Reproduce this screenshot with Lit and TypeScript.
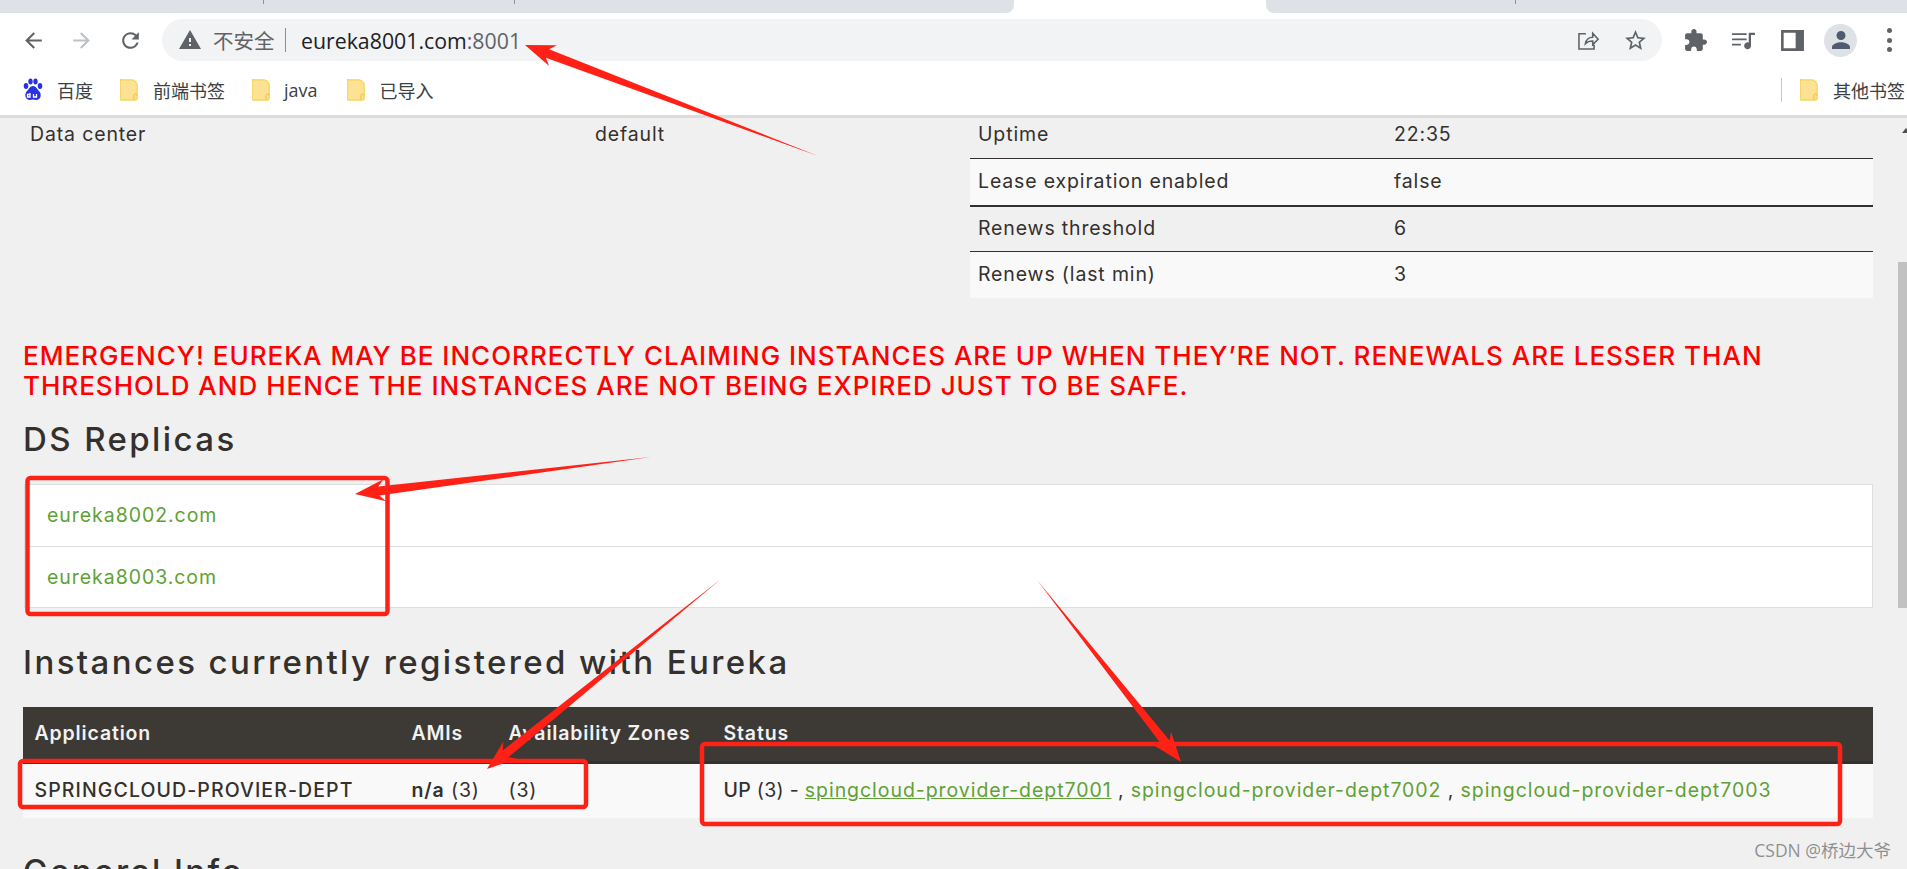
import { LitElement, html, css, svg } from "lit";
import { customElement } from "lit/decorators.js";

type P = [number, number];
const arrows: [P, P][] = [
  [[818, 156], [525, 45]],
  [[651, 457], [355, 494]],
  [[721, 579], [487, 769]],
  [[1037, 580], [1181, 762]],
];
const boxes = [
  [27.5, 478, 360, 136],
  [20, 761, 566, 46],
  [702, 744, 1138, 80],
];
function arrowPoints([s, t]: [P, P]) {
  const dx = t[0] - s[0], dy = t[1] - s[1];
  const len = Math.hypot(dx, dy);
  const d = [dx / len, dy / len], n = [-d[1], d[0]];
  const at = (back: number, off: number) =>
    `${t[0] - d[0] * back + n[0] * off},${t[1] - d[1] * back + n[1] * off}`;
  return [`${s[0]},${s[1]}`, at(24, 4.5), at(30, 11), `${t[0]},${t[1]}`, at(30, -11), at(24, -4.5)].join(" ");
}

const icon = (d: string) => html`<svg class="ico" viewBox="0 0 24 24"><path d=${d}></path></svg>`;
const folder = html`<svg class="folder" viewBox="0 0 18 22">
  <path class="folder-body" d="M1.5 .8h10.5q1.6 0 3 1.4l1.2 1.4q1 1 1 2.4v13q0 2-2 2h-13.700q-1.300 0-1.300-1.300v-18.700q0-.8 1.300-.8z"></path>
  <path class="folder-clip" d="M14 20.500v-4q0-1.500 1.500-1.500t1.500 1.500"></path>
</svg>`;

@customElement("app-root")
export class AppRoot extends LitElement {
  static styles = css`
    :host { display: block; position: relative; width: 1907px; height: 869px; overflow: hidden; background: #f0f0f0; font-family: Inter, "Noto Sans CJK SC", sans-serif; color: #34302d; }
    .tabs { height: 13px; background: #fff; display: flex; justify-content: space-between; }
    .seg { height: 13px; background: #dee1e6; display: flex; }
    .seg.l { width: 1014px; border-bottom-right-radius: 8px; }
    .seg.r { width: 641px; border-bottom-left-radius: 8px; }
    .seg i { display: block; width: 1px; height: 4px; background: #8f9296; }
    .t1 { margin-left: 263px; } .t2 { margin-left: 250px; }
    .t4 { margin-left: 249px; }
    .toolbar { height: 53px; box-sizing: border-box; padding: 6px 0 0 9px; background: #fff; display: flex; align-items: flex-start; }
    .btn { flex: none; width: 48.500px; height: 42px; display: flex; align-items: center; justify-content: center; }
    .ico { width: 25px; height: 25px; fill: #5f6368; display: block; }
    .ico.even { fill-rule: evenodd; }
    .off .ico { fill: #bdc1c6; }
    .omni { flex: none; margin-left: 7.500px; width: 1500px; height: 42px; border-radius: 21px; background: #f1f3f4; display: flex; align-items: center; font-family: "Open Sans", "Noto Sans CJK SC", sans-serif; box-sizing: border-box; padding-left: 16px; }
    .omni .warn { width: 24px; height: 24px; }
    .insecure { margin-left: 11px; font-size: 20.500px; color: #5f6368; }
    .bar { margin: 0 15px 0 10px; width: 1.500px; height: 24px; background: #8a8d91; }
    .host { font-size: 21.300px; color: #202124; }
    .host span { color: #5f6368; }
    .grow { flex: 1; }
    .omni .btn { width: 48px; }
    .omni .btn.end { margin-right: 3px; }
    .tool-first { margin-left: 9px; }
    .avatar { width: 33px; height: 33px; border-radius: 50%; background: #dee1e6; display: flex; align-items: center; justify-content: center; }
    .avatar svg { width: 24px; height: 24px; fill: #4f5b6e; }
    .dots { display: flex; flex-direction: column; gap: 4.500px; }
    .dots b { width: 5px; height: 5px; border-radius: 50%; background: #5f6368; display: block; }
    .stroke { fill: none; stroke: #5f6368; stroke-width: 1.500; }
    .marks { height: 49px; background: #fff; display: flex; align-items: center; padding-left: 23px; font: 18px "Open Sans", "Noto Sans CJK SC", sans-serif; color: #3c4043; box-sizing: border-box; padding-bottom: 2px; }
    .mark { display: flex; align-items: center; gap: 15px; margin-right: 27px; white-space: nowrap; flex: none; }
    .mark.java { margin-right: 29px; gap: 14px; }
    .paw { width: 20px; height: 24px; margin-right: -1px; }
    .folder { width: 18px; height: 22px; flex: none; }
    .folder-body { fill: #fde293; stroke: #f8d45c; stroke-width: 1.300; }
    .folder-clip { fill: none; stroke: #f1bb3a; stroke-width: 1; }
    .marks .sep { width: 1px; height: 24px; background: #c6c8ca; margin-right: 18px; flex: none; }
    .marks .last { margin-right: 2px; }
    .rule { height: 3px; background: #dcdcdc; }
    .page { height: 751px; display: flex; overflow: hidden; }
    .main { width: 1850px; margin-left: 23px; flex: none; font-size: 19.500px; letter-spacing: .85px; }
    .scroll { width: 9px; margin-left: 25px; flex: none; position: relative; }
    .thumb { position: absolute; left: 0; right: 0; top: 144px; height: 346px; background: #c1c1c1; }
    .up { position: absolute; left: 4px; top: 10px; width: 0; height: 0; border: 4px solid transparent; border-top: 0; border-bottom: 5px solid #505050; }
    .top { display: flex; height: 179px; }
    .left { width: 947px; flex: none; display: grid; grid-template-columns: 565px 1fr; padding: 4px 0 0 7px; box-sizing: border-box; height: 40px; line-height: 24px; }
    .right { flex: 1; }
    .kv { display: grid; grid-template-columns: 416px 1fr; box-sizing: border-box; align-items: center; padding: 0 0 2px 8px; height: 46.500px; border-top: 1px solid #34302d; }
    .kv.first { height: 40px; border-top: 0; padding-bottom: 9px; }
    .kv.odd { background: #f9f9f9; }
    .kv.thick { border-top-width: 2px; }
    .emergency { margin: 44px 0 0; font-size: 26px; line-height: 29.500px; font-weight: 500; color: #ff0000; text-transform: uppercase; width: 1780px; letter-spacing: 1px; }
    h2 { margin: 0; font-size: 33px; font-weight: 500; line-height: 40px; color: #34302d; letter-spacing: 2.400px; }
    .h-ds { margin-top: 19px; }
    .panel { margin-top: 25px; margin-left: 1px; background: #fff; border: 1px solid #ddd; height: 124px; box-sizing: border-box; }
    .panel div { height: 61px; box-sizing: border-box; padding: 0 0 2px 22px; display: flex; align-items: center; }
    .panel div + div { border-top: 1px solid #ddd; height: 61px; padding-bottom: 0; }
    a { color: #5fa134; text-decoration: none; letter-spacing: .95px; }
    a.u { text-decoration: underline; }
    .h-in { margin-top: 34px; }
    .grid { display: grid; grid-template-columns: 377px 97px 214px 1fr; align-items: center; padding-bottom: 2px; box-sizing: border-box; }
    .grid > * { padding-left: 11.500px; white-space: nowrap; }
    .grid > .status { padding-left: 12.500px; }
    .head { margin-top: 25px; height: 57px; background: #3d3935; color: #f1f1f1; font-weight: 600; border-bottom: 3px solid #34302d; }
    .row { height: 54px; background: #f9f9f9; }
    .row b { font-weight: 600; }
    .lead { letter-spacing: .3px; }
    .lead b { font-weight: 500; }
    .app { font-weight: 500; letter-spacing: 1.100px; }
    .h-gen { margin-top: 33px; }
    .overlay { position: absolute; left: 0; top: 0; width: 1907px; height: 869px; pointer-events: none; }
    .overlay polygon { fill: #ff2116; }
    .overlay rect { fill: none; stroke: #ff2116; stroke-width: 4.500; }
    .mark-csdn { position: absolute; right: 16px; top: 837px; font: 17.500px "Open Sans", "Noto Sans CJK SC", sans-serif; color: rgba(110, 110, 110, .75); white-space: nowrap; }
  `;

  render() {
    return html`
      <div class="tabs">
        <div class="seg l"><i class="t1"></i><i class="t2"></i></div>
        <div class="seg r"><i class="t4"></i></div>
      </div>
      <div class="toolbar">
        <div class="btn">${icon("M20 11H7.830l5.590-5.590L12 4l-8 8 8 8 1.410-1.410L7.830 13H20v-2z")}</div>
        <div class="btn off"><svg class="ico" viewBox="0 0 24 24"><path d="M4 11h12.170l-5.590-5.590L12 4l8 8-8 8-1.410-1.410L16.170 13H4v-2z"></path></svg></div>
        <div class="btn">${icon("M17.650 6.350A7.958 7.958 0 0 0 12 4c-4.420 0-7.990 3.580-7.990 8s3.570 8 7.990 8c3.730 0 6.840-2.550 7.730-6h-2.080A5.990 5.990 0 0 1 12 18c-3.310 0-6-2.690-6-6s2.690-6 6-6c1.660 0 3.140.690 4.220 1.780L13 11h7V4l-2.350 2.350z")}</div>
        <div class="omni">
          <svg class="ico warn" viewBox="0 0 24 24"><path d="M1 21h22L12 2 1 21zm12-3h-2v-2h2v2zm0-4h-2v-4h2v4z"></path></svg>
          <span class="insecure">不安全</span><span class="bar"></span>
          <span class="host">eureka8001.com<span>:8001</span></span>
          <span class="grow"></span>
          <div class="btn"><svg class="ico" viewBox="0 0 24 24"><path class="stroke" d="M10.500 5.500H3.800v14.700h14.500V16M10 15c.6-4 3.700-6.200 7-6.200V5l5.200 5.800L17 16v-3.600c-2.800 0-5.300.7-7 2.600z"></path></svg></div>
          <div class="btn end">${icon("M22 9.240l-7.190-.620L12 2 9.190 8.630 2 9.240l5.460 4.730L5.820 21 12 17.270 18.180 21l-1.630-7.030L22 9.240zM12 15.400l-3.760 2.270 1-4.280-3.320-2.880 4.380-.380L12 6.100l1.710 4.040 4.380.380-3.320 2.880 1 4.280L12 15.400z")}</div>
        </div>
        <div class="btn tool-first">${icon("M20.500 11H19V7c0-1.100-.9-2-2-2h-4V3.500C13 2.120 11.880 1 10.500 1S8 2.120 8 3.500V5H4c-1.100 0-1.990.9-1.990 2v3.800H3.500c1.490 0 2.700 1.210 2.700 2.700s-1.210 2.700-2.700 2.700H2V20c0 1.100.9 2 2 2h3.800v-1.500c0-1.490 1.210-2.700 2.700-2.700 1.490 0 2.700 1.210 2.700 2.700V22H17c1.100 0 2-.9 2-2v-4h1.500c1.380 0 2.500-1.120 2.500-2.500S21.880 11 20.500 11z")}</div>
        <div class="btn">${icon("M1 5h14v1.700H1zM1 10h14v1.700H1zM1 15h8.500v1.700H1zM17 4.500h6v2.300h-3.800V17a3.300 3.300 0 1 1-2.200-3.100z")}</div>
        <div class="btn"><svg class="ico even" viewBox="0 0 24 24"><path d="M1 2h22v20H1zM3.500 4.500v15H15v-15z"></path></svg></div>
        <div class="btn"><div class="avatar"><svg viewBox="0 0 24 24"><path d="M12 12a4.500 4.500 0 1 0 0-9 4.500 4.500 0 0 0 0 9zm0 2.300c-3.400 0-9 1.700-9 4.700v2h18v-2c0-3-5.600-4.700-9-4.700z"></path></svg></div></div>
        <div class="btn"><div class="dots"><b></b><b></b><b></b></div></div>
      </div>
      <div class="marks">
        <div class="mark"><svg class="paw" viewBox="0 0 20 24"><g fill="#2932e1"><ellipse cx="3" cy="8" rx="2.300" ry="3"></ellipse><ellipse cx="7.500" cy="3.500" rx="2.200" ry="3"></ellipse><ellipse cx="12.500" cy="3.500" rx="2.200" ry="3"></ellipse><ellipse cx="17" cy="8" rx="2.300" ry="3"></ellipse><path d="M10 8c3 0 4 3 6 5 3 3 2 9-3 9-1 0-2-.5-3-.5s-2 .5-3 .5c-5 0-6-6-3-9 2-2 3-5 6-5z"></path></g><path d="M7 15v4h-2.500v-2.500H7M10.500 16v3h3v-3" fill="none" stroke="#fff" stroke-width="1.300"></path></svg><span>百度</span></div>
        <div class="mark">${folder}<span>前端书签</span></div>
        <div class="mark java">${folder}<span>java</span></div>
        <div class="mark">${folder}<span>已导入</span></div>
        <span class="grow"></span>
        <span class="sep"></span>
        <div class="mark last">${folder}<span>其他书签</span></div>
      </div>
      <div class="rule"></div>
      <div class="page">
        <div class="main">
          <div class="top">
            <div class="left"><span>Data center</span><span>default</span></div>
            <div class="right">
              <div class="kv first"><span>Uptime</span><span>22:35</span></div>
              <div class="kv odd"><span>Lease expiration enabled</span><span>false</span></div>
              <div class="kv thick"><span>Renews threshold</span><span>6</span></div>
              <div class="kv odd"><span>Renews (last min)</span><span>3</span></div>
            </div>
          </div>
          <p class="emergency">Emergency! Eureka may be incorrectly claiming instances are up when they’re not. Renewals are lesser than threshold and hence the instances are not being expired just to be safe.</p>
          <h2 class="h-ds">DS Replicas</h2>
          <div class="panel"><div><a>eureka8002.com</a></div><div><a>eureka8003.com</a></div></div>
          <h2 class="h-in">Instances currently registered with Eureka</h2>
          <div class="grid head"><span>Application</span><span>AMIs</span><span>Availability Zones</span><span class="status">Status</span></div>
          <div class="grid row"><span class="app">SPRINGCLOUD-PROVIER-DEPT</span><span><b>n/a</b> (3)</span><span>(3)</span><span class="status"><span class="lead"><b>UP</b> (3) - </span><a class="u">spingcloud-provider-dept7001</a> , <a>spingcloud-provider-dept7002</a> , <a>spingcloud-provider-dept7003</a></span></div>
          <h2 class="h-gen">General Info</h2>
        </div>
        <div class="scroll"><i class="up"></i><div class="thumb"></div></div>
      </div>
      <svg class="overlay" viewBox="0 0 1907 869">
        ${boxes.map(([x, y, w, h]) => svg`<rect x=${x} y=${y} width=${w} height=${h} rx="3"></rect>`)}
        ${arrows.map((a) => svg`<polygon points=${arrowPoints(a)}></polygon>`)}
      </svg>
      <div class="mark-csdn">CSDN @桥边大爷</div>
    `;
  }
}
